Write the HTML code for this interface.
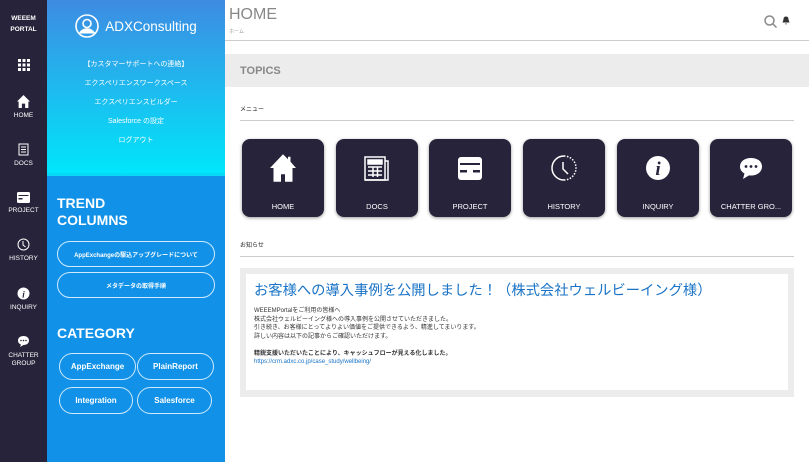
<!DOCTYPE html>
<html><head><meta charset="utf-8"><style>
*{box-sizing:border-box;margin:0;padding:0}
body{width:809px;height:462px;overflow:hidden;font-family:"Liberation Sans","Noto Sans CJK JP",sans-serif;background:#fff;position:relative}
#nav{position:absolute;left:0;top:0;width:47px;height:462px;background:#27233a;color:#fff;text-align:center}
#nav .b{font-size:6.5px;font-weight:bold;line-height:11px;margin-top:13px}
#nav .it{position:absolute;left:0;width:47px;font-size:6.5px;text-align:center;line-height:8px}
#nav svg{display:block;margin:0 auto 4px}
#side{position:absolute;left:47px;top:0;width:178px;height:462px;background:#1192e8;color:#fff}
#top{height:176px;background:linear-gradient(#3e8be2,#00e6fa);border-bottom:3px solid #07d8f5;text-align:center}
#top .logo{padding-top:14px;display:flex;align-items:center;justify-content:center;gap:6px;font-size:13.5px}
#top .m{font-size:7px;line-height:19px}
h2{font-size:14px;font-weight:bold;margin-left:10px;line-height:17px}
.pill{border:1px solid rgba(255,255,255,.8);border-radius:14px;height:26px;margin:0 10px 5px;font-size:6px;font-weight:bold;display:flex;align-items:center;justify-content:center}
.cat{position:absolute;border:1px solid rgba(255,255,255,.8);border-radius:14px;height:27px;width:77px;font-size:8px;font-weight:bold;display:flex;align-items:center;justify-content:center}
#main{position:absolute;left:225px;top:0;width:584px;height:462px}
.tile{position:absolute;top:139px;width:82px;height:78px;background:#27233a;border-radius:8px;box-shadow:0 1px 3px rgba(0,0,0,.4);color:#fff;font-size:7.5px;text-align:center}
.tile svg{position:absolute;left:26px;top:14px}
.tile span{position:absolute;left:0;right:0;top:63px}
</style></head><body>
<div id="nav">
<div class="b">WEEEM<br>PORTAL</div>
<div class="it" style="top:59px"><svg width="12" height="12" viewBox="0 0 12 12" fill="#fff"><rect x="0" y="0" width="3" height="3"/><rect x="4.5" y="0" width="3" height="3"/><rect x="9" y="0" width="3" height="3"/><rect x="0" y="4.5" width="3" height="3"/><rect x="4.5" y="4.5" width="3" height="3"/><rect x="9" y="4.5" width="3" height="3"/><rect x="0" y="9" width="3" height="3"/><rect x="4.5" y="9" width="3" height="3"/><rect x="9" y="9" width="3" height="3"/></svg></div>
<div class="it" style="top:95px"><svg width="13" height="13" viewBox="0 0 12 12" fill="#fff"><path d="M6 0L0 6h1.5v6h3V8h3v4h3V6H12z"/></svg>HOME</div>
<div class="it" style="top:143px"><svg width="12" height="13" viewBox="0 0 12 13" fill="none" stroke="#fff"><rect x="1" y="1" width="9" height="11"/><path d="M3 4h5M3 6.5h5M3 9h5"/></svg>DOCS</div>
<div class="it" style="top:191px"><svg width="13" height="12" viewBox="0 0 13 12" fill="#fff"><rect x="0" y="1" width="13" height="11" rx="1.5"/><rect x="1.5" y="4" width="10" height="1" fill="#27233a"/><rect x="1.5" y="7" width="4" height="1.5" fill="#27233a"/></svg>PROJECT</div>
<div class="it" style="top:238px"><svg width="13" height="13" viewBox="0 0 13 13" fill="none" stroke="#fff"><circle cx="6.5" cy="6.5" r="5.5"/><path d="M6 3v4l2.5 2"/></svg>HISTORY</div>
<div class="it" style="top:287px"><svg width="13" height="13" viewBox="0 0 13 13"><circle cx="6.5" cy="6.5" r="6" fill="#fff"/><text x="6.5" y="10.5" font-size="9" font-style="italic" font-weight="bold" text-anchor="middle" fill="#27233a" font-family="Liberation Serif">i</text></svg>INQUIRY</div>
<div class="it" style="top:335px"><svg width="13" height="13" viewBox="0 0 13 13"><path d="M6.5 1C3 1 1 3 1 5.5c0 2 1.2 3.3 3 4l-1 2.5 3.5-2C10 10 12 8 12 5.5S10 1 6.5 1z" fill="#fff"/><circle cx="4" cy="5.5" r=".8" fill="#27233a"/><circle cx="6.5" cy="5.5" r=".8" fill="#27233a"/><circle cx="9" cy="5.5" r=".8" fill="#27233a"/></svg>CHATTER<br>GROUP</div>
</div>
<div id="side">
<div id="top">
<div class="logo"><svg width="24" height="24" viewBox="0 0 24 24" fill="none" stroke="#fff" stroke-width="1.6"><circle cx="12" cy="12" r="11"/><circle cx="12" cy="9.5" r="4"/><path d="M4.5 19.5c2-3.5 5-4.5 7.5-4.5s5.5 1 7.5 4.5" fill="#fff"/></svg>ADXConsulting</div>
<div class="m" style="margin-top:17px">【カスタマーサポートへの連絡】</div>
<div class="m">エクスペリエンスワークスペース</div>
<div class="m">エクスペリエンスビルダー</div>
<div class="m">Salesforce の設定</div>
<div class="m">ログアウト</div>
</div>
<h2 style="margin-top:19px">TREND<br>COLUMNS</h2>
<div style="height:12px"></div>
<div class="pill">AppExchangeの駆込アップグレードについて</div>
<div class="pill">メタデータの取得手順</div>
<h2 style="margin-top:27px">CATEGORY</h2>
<div class="cat" style="left:12px;top:353px">AppExchange</div>
<div class="cat" style="left:90px;top:353px">PlainReport</div>
<div class="cat" style="left:12px;top:387px;width:74px">Integration</div>
<div class="cat" style="left:90px;top:387px;width:75px">Salesforce</div>
</div>
<div id="main">
<div style="position:absolute;left:4px;top:6px;font-size:16px;color:#888">HOME</div>
<div style="position:absolute;left:4px;top:28px;font-size:5px;color:#999">ホーム</div>
<svg style="position:absolute;left:539px;top:15px" width="13" height="13" viewBox="0 0 13 13" fill="none" stroke="#888" stroke-width="1.5"><circle cx="5.5" cy="5.5" r="4.5"/><path d="M9 9l3.5 3.5"/></svg>
<svg style="position:absolute;left:557px;top:16px" width="8" height="9" viewBox="0 0 8 9" fill="#333"><path d="M4 0.5c-2 0-2.5 1.5-2.5 3L.5 6.5h7l-1-3C6.5 2 6 .5 4 .5zM3 7.5h2L4 8.8z"/></svg>
<div style="position:absolute;left:0;top:40px;width:584px;height:1px;background:#ccc"></div>
<div style="position:absolute;left:0;top:54px;width:584px;height:33px;background:#ececec;font-size:11px;font-weight:bold;color:#888;padding:11px 0 0 15px">TOPICS</div>
<div style="position:absolute;left:15px;top:104px;font-size:6px;color:#222">メニュー</div>
<div style="position:absolute;left:15px;top:120px;width:554px;height:1px;background:#ccc"></div>
<div class="tile" style="left:17px"><svg width="30" height="30" viewBox="0 0 12 12" fill="#fff"><path d="M6 .5L.8 6h1.4v5.5h3V8.5h1.6v3h3V6h1.4L9 3.5V1.5H8v1z"/></svg><span>HOME</span></div>
<div class="tile" style="left:111px"><svg width="30" height="30" viewBox="0 0 30 30" fill="none" stroke="#fff" stroke-width="1.5"><rect x="3" y="4" width="20" height="23"/><path d="M23 8h3v19H3"/><rect x="6" y="7" width="14" height="4" fill="#fff"/><path d="M6 14h14M6 18h14M6 22h14M11 14v10M15.5 14v10"/></svg><span>DOCS</span></div>
<div class="tile" style="left:204px"><svg width="30" height="30" viewBox="0 0 30 30" fill="#fff"><rect x="3" y="4" width="24" height="23" rx="3"/><rect x="5" y="10" width="20" height="2" fill="#27233a"/><rect x="5" y="17" width="7" height="2.5" fill="#27233a"/><rect x="18" y="17" width="7" height="2.5" fill="#27233a"/></svg><span>PROJECT</span></div>
<div class="tile" style="left:298px"><svg width="30" height="30" viewBox="0 0 30 30" fill="none" stroke="#fff" stroke-width="1.5"><path d="M15 3a12 12 0 1 0 0 24"/><path d="M15 3a12 12 0 0 1 0 24" stroke-dasharray="1.5 1.5"/><path d="M14 9v7l5 5"/></svg><span>HISTORY</span></div>
<div class="tile" style="left:392px"><svg width="30" height="30" viewBox="0 0 30 30"><circle cx="15" cy="15" r="12" fill="#fff"/><text x="15" y="22" font-size="19" font-style="italic" font-weight="bold" text-anchor="middle" fill="#27233a" font-family="Liberation Serif">i</text></svg><span>INQUIRY</span></div>
<div class="tile" style="left:485px"><svg width="30" height="30" viewBox="0 0 30 30"><path d="M15 5C8.5 5 4 8.5 4 13.5c0 3 1.8 5.5 4.5 7L7 26l6-3.6c.7.1 1.3.1 2 .1 6.5 0 11-3.8 11-9S21.5 5 15 5z" fill="#fff"/><circle cx="10" cy="13.5" r="1.4" fill="#27233a"/><circle cx="15" cy="13.5" r="1.4" fill="#27233a"/><circle cx="20" cy="13.5" r="1.4" fill="#27233a"/></svg><span>CHATTER GRO...</span></div>
<div style="position:absolute;left:15px;top:240px;font-size:6px;color:#222">お知らせ</div>
<div style="position:absolute;left:15px;top:256px;width:554px;height:1px;background:#ccc"></div>
<div style="position:absolute;left:15px;top:268px;width:554px;height:129px;background:#ececec;padding:6px">
<div style="background:#fff;height:116px;padding:9px 0 0 8px">
<div style="font-size:14.3px;color:#1a73c6;line-height:17px">お客様への導入事例を公開しました！（株式会社ウェルビーイング様）</div>
<div style="font-size:6px;color:#333;line-height:8.5px;margin-top:7px">WEEEMPortalをご利用の皆様へ<br>株式会社ウェルビーイング様への導入事例を公開させていただきました。<br>引き続き、お客様にとってよりよい価値をご提供できるよう、精進してまいります。<br>詳しい内容は以下の記事からご確認いただけます。<br><br><b>精鋭支援いただいたことにより、キャッシュフローが見える化しました。</b><br><span style="color:#1a73c6">https://crm.adxc.co.jp/case_study/wellbeing/</span></div>
</div></div>
</div>
</body></html>
